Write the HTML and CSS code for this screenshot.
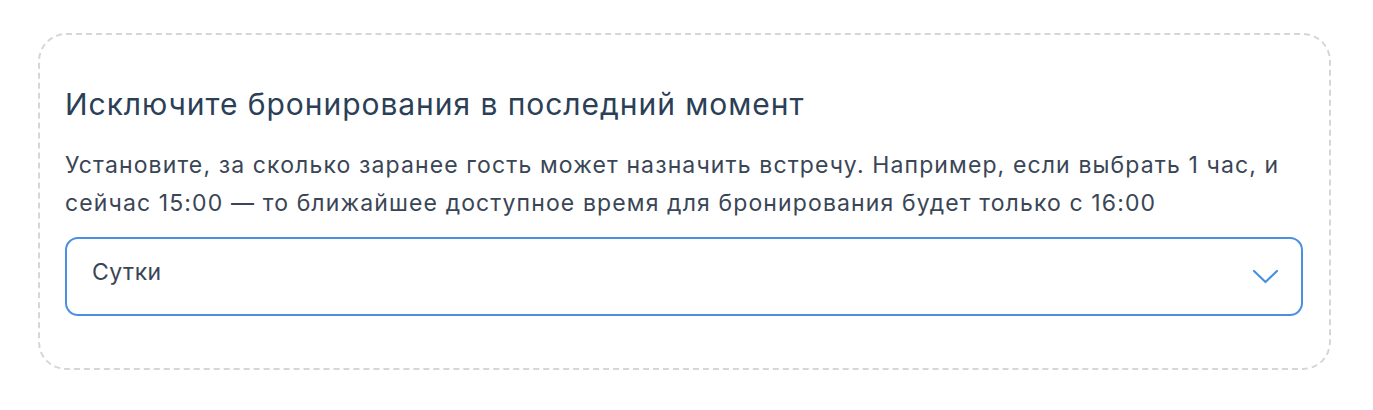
FILE: index.html
```html
<!DOCTYPE html>
<html lang="ru">
<head>
    <meta charset="UTF-8">
    <meta name="viewport" content="width=device-width, initial-scale=1.0">
    <title>Бронирование</title>
    <link rel="stylesheet" href="styles.css">
</head>
<body>
    <div class="card">
        <p class="title">Исключите бронирования в последний момент</p>
        <p class="desc">Установите, за сколько заранее гость может назначить встречу. Например, если выбрать 1 час, и сейчас 15:00 — то ближайшее доступное время для бронирования будет только с 16:00</p>
        <div class="select">
            <span class="select-value">Сутки</span>
            <svg class="chevron" width="27" height="15" viewBox="0 0 27 15" fill="none">
                <path d="M2 2 L13.5 13 L25 2" stroke="#4a90e2" stroke-width="2.2" stroke-linecap="round" stroke-linejoin="round"/>
            </svg>
        </div>
    </div>
</body>
</html>
```

FILE: styles.css
```css
body{
    margin: 0;
    background-color: white;
    font-family: Inter, "Noto Sans", sans-serif;
}
.card{
    margin: 33px 42px 0 38px;
    padding: 49px 26px 52px 25px;
    border: 2px dashed #d6d6d6;
    border-radius: 28px;
}
.title{
    margin: 0 0 22px 0;
    font-size: 30px;
    line-height: 40px;
    letter-spacing: 0.95px;
    color: #2b4057;
}
.desc{
    margin: 0;
    font-size: 23px;
    line-height: 38px;
    letter-spacing: 1.12px;
    color: #3a4656;
}
.select{
    margin-top: 15px;
    height: 75px;
    display: flex;
    justify-content: space-between;
    align-items: center;
    padding: 0 22px 0 25px;
    border: 2px solid #4a90e2;
    border-radius: 13px;
}
.select-value{
    margin-bottom: 10px;
    font-size: 23px;
    letter-spacing: 0.5px;
    color: #3a4656;
}
```
